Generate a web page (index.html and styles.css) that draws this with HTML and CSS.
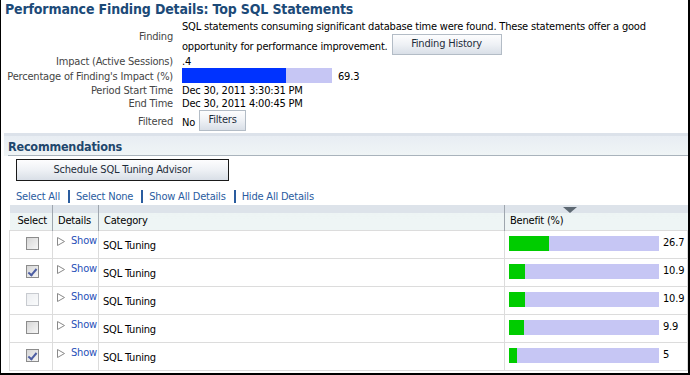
FILE: index.html
```html
<!DOCTYPE html>
<html lang="en">
<head>
  <meta charset="UTF-8" />
  <title>Performance Finding Details</title>
  <link rel="stylesheet" href="styles.css">
</head>
<body>
  <div class="page">
    <h1 class="judul">Performance Finding Details: Top SQL Statements</h1>

    <div class="detail">
      <div class="lbl">Finding</div>
      <div class="val finding">
        <div>SQL statements consuming significant database time were found. These statements offer a good</div>
        <div class="baris-dua"><span class="teks">opportunity for performance improvement.</span><span class="tombol tombol-history">Finding History</span></div>
      </div>

      <div class="lbl">Impact (Active Sessions)</div>
      <div class="val">.4</div>

      <div class="lbl">Percentage of Finding's Impact (%)</div>
      <div class="val bar-row">
        <span class="bar bar-impact"><span class="isi" style="width:69.3%"></span></span>
        <span class="angka">69.3</span>
      </div>

      <div class="lbl">Period Start Time</div>
      <div class="val">Dec 30, 2011 3:30:31 PM</div>

      <div class="lbl">End Time</div>
      <div class="val">Dec 30, 2011 4:00:45 PM</div>

      <div class="lbl">Filtered</div>
      <div class="val filtered"><span class="no">No</span><span class="tombol tombol-filter">Filters</span></div>
    </div>

    <div class="sub-header">
      <h2>Recommendations</h2>
    </div>

    <div class="rekomendasi">
      <span class="tombol tombol-utama">Schedule SQL Tuning Advisor</span>

      <div class="tautan">
        <a href="#">Select All</a><span class="pemisah"></span><a href="#">Select None</a><span class="pemisah"></span><a href="#">Show All Details</a><span class="pemisah"></span><a href="#">Hide All Details</a>
      </div>

      <table class="tabel">
        <thead>
          <tr>
            <th class="kol-select">Select</th>
            <th class="kol-details">Details</th>
            <th class="kol-category">Category</th>
            <th class="kol-benefit">Benefit (%)<span class="sort"></span></th>
          </tr>
        </thead>
        <tbody>
          <tr>
            <td class="kol-select"><span class="cek"></span></td>
            <td class="kol-details"><svg class="panah" width="8" height="9" viewBox="0 0 8 9"><polygon points="0.5,0.5 7.5,4.5 0.5,8.5" fill="#fff" stroke="#8a8a8a"/></svg><a href="#">Show</a></td>
            <td class="kol-category">SQL Tuning</td>
            <td class="kol-benefit"><span class="bar"><span class="isi hijau" style="width:26.7%"></span></span><span class="angka">26.7</span></td>
          </tr>
          <tr>
            <td class="kol-select"><span class="cek dicek"></span></td>
            <td class="kol-details"><svg class="panah" width="8" height="9" viewBox="0 0 8 9"><polygon points="0.5,0.5 7.5,4.5 0.5,8.5" fill="#fff" stroke="#8a8a8a"/></svg><a href="#">Show</a></td>
            <td class="kol-category">SQL Tuning</td>
            <td class="kol-benefit"><span class="bar"><span class="isi hijau" style="width:10.9%"></span></span><span class="angka">10.9</span></td>
          </tr>
          <tr>
            <td class="kol-select"><span class="cek pudar"></span></td>
            <td class="kol-details"><svg class="panah" width="8" height="9" viewBox="0 0 8 9"><polygon points="0.5,0.5 7.5,4.5 0.5,8.5" fill="#fff" stroke="#8a8a8a"/></svg><a href="#">Show</a></td>
            <td class="kol-category">SQL Tuning</td>
            <td class="kol-benefit"><span class="bar"><span class="isi hijau" style="width:10.9%"></span></span><span class="angka">10.9</span></td>
          </tr>
          <tr>
            <td class="kol-select"><span class="cek"></span></td>
            <td class="kol-details"><svg class="panah" width="8" height="9" viewBox="0 0 8 9"><polygon points="0.5,0.5 7.5,4.5 0.5,8.5" fill="#fff" stroke="#8a8a8a"/></svg><a href="#">Show</a></td>
            <td class="kol-category">SQL Tuning</td>
            <td class="kol-benefit"><span class="bar"><span class="isi hijau" style="width:9.9%"></span></span><span class="angka">9.9</span></td>
          </tr>
          <tr>
            <td class="kol-select"><span class="cek dicek"></span></td>
            <td class="kol-details"><svg class="panah" width="8" height="9" viewBox="0 0 8 9"><polygon points="0.5,0.5 7.5,4.5 0.5,8.5" fill="#fff" stroke="#8a8a8a"/></svg><a href="#">Show</a></td>
            <td class="kol-category">SQL Tuning</td>
            <td class="kol-benefit"><span class="bar"><span class="isi hijau" style="width:5%"></span></span><span class="angka">5</span></td>
          </tr>
        </tbody>
      </table>
    </div>
  </div>
</body>
</html>
```

FILE: styles.css
```css
* {
  margin: 0;
  padding: 0;
  box-sizing: border-box;
}

body {
  background: #fff;
}

.page {
  width: 690px;
  height: 375px;
  overflow: hidden;
  border: 2px solid #000;
  border-top: 0;
  border-left-width: 1px;
  font-family: "DejaVu Sans Condensed", "DejaVu Sans", sans-serif;
  font-stretch: condensed;
  font-size: 11px;
  letter-spacing: -0.2px;
  color: #000;
}

.judul {
  font-size: 14px;
  letter-spacing: -0.15px;
  line-height: 18px;
  padding-left: 4px;
  color: #1c4a78;
}

/* bagian detail */
.detail {
  display: grid;
  grid-template-columns: 172px 1fr;
  grid-template-rows: 37px 14px 15px 13px 14px 21px;
  column-gap: 9px;
}

.lbl {
  text-align: right;
  color: #454545;
  align-self: center;
  line-height: 14px;
  white-space: nowrap;
}

.val {
  line-height: 14px;
  align-self: center;
  white-space: nowrap;
}

.finding {
  padding-top: 2px;
  align-self: start;
}

.baris-dua {
  display: flex;
  align-items: flex-start;
  gap: 4px;
}

.baris-dua .teks {
  padding-top: 6px;
}

.tombol {
  display: inline-block;
  text-align: center;
  color: #1e2d3b;
  border: 1px solid #b3bcc6;
  background: linear-gradient(to bottom, #fdfdfe 0%, #eef1f5 50%, #d9dfe7 100%);
  cursor: pointer;
}

.tombol-history {
  width: 110px;
  height: 21px;
  line-height: 18px;
}

.filtered {
  align-self: stretch;
  display: flex;
  align-items: flex-start;
}

.filtered .no {
  padding-top: 5px;
}

.tombol-filter {
  width: 47px;
  height: 21px;
  line-height: 18px;
  margin-left: 4px;
  margin-top: -1px;
}

.bar-row {
  display: flex;
  align-items: center;
  margin-top: -3px;
}

.bar {
  display: inline-block;
  width: 150px;
  height: 15px;
  background: #c6c6f4;
  vertical-align: top;
}

.bar .isi {
  display: block;
  height: 100%;
  background: #0033ff;
}

.bar .isi.hijau {
  background: #00cc00;
}

.bar-row .angka {
  margin-left: 6px;
  margin-top: 3px;
}

/* sub header */
.sub-header {
  margin-top: 1px;
  margin-left: 3px;
  height: 23px;
  background: linear-gradient(to bottom, #dce2ea 0, #dce2ea 3px, #e8edf3 3px, #f0f5f6 100%);
}

.sub-header h2 {
  margin-left: 4px;
  font-size: 12.5px;
  letter-spacing: -0.2px;
  line-height: 16px;
  padding-top: 6px;
  color: #1f476d;
  border-bottom: 1px solid #a9b3bc;
}

.rekomendasi {
  padding-left: 8px;
}

.tombol-utama {
  margin-top: 3px;
  margin-left: 7px;
  width: 213px;
  height: 22px;
  line-height: 20px;
  border-color: #1a1a1a;
}

.tautan {
  margin-top: 8px;
  margin-left: 7px;
  height: 15px;
  line-height: 15px;
  display: flex;
  align-items: center;
}

.tautan a {
  color: #2a5c9f;
  text-decoration: none;
}

.pemisah {
  display: inline-block;
  width: 2px;
  height: 13px;
  background: #2a5c9f;
  margin: 0 6px 0 8px;
}

/* tabel */
.tabel {
  margin-top: 1px;
  width: 679px;
  border-collapse: collapse;
  table-layout: fixed;
}

.tabel th {
  height: 25px;
  font-weight: normal;
  text-align: left;
  padding: 7px 0 0 5px;
  border-left: 1px solid #9ea6ae;
  background: linear-gradient(to bottom, #dde3ea 0, #dde3ea 8px, #edf4f4 8px, #eef5f5 100%);
  position: relative;
}

.tabel th:first-child {
  border-left: 0;
  padding-left: 8px;
}

.tabel td {
  height: 28px;
  border: 1px solid #dcdcdc;
  padding-left: 4px;
}

.kol-select { width: 43px; }
.kol-details { width: 46px; }
.kol-category { width: 406px; }

.tabel td.kol-select {
  text-align: center;
  padding-left: 2px;
  vertical-align: top;
  padding-top: 6px;
}

.tabel td.kol-details {
  vertical-align: top;
  padding-top: 3px;
  white-space: nowrap;
}

.panah {
  margin-right: 6px;
  margin-top: 3px;
  vertical-align: top;
}

.kol-details a {
  color: #2750b8;
  text-decoration: none;
}

.tabel td.kol-category {
  padding-top: 2px;
}

.tabel td.kol-benefit {
  padding-left: 4px;
  vertical-align: top;
  padding-top: 5px;
  white-space: nowrap;
}

.kol-benefit .angka {
  margin-left: 4px;
  line-height: 14px;
}

.sort {
  position: absolute;
  left: 58px;
  top: 2px;
  width: 0;
  height: 0;
  border-left: 7px solid transparent;
  border-right: 7px solid transparent;
  border-top: 6px solid #5d6872;
}

.cek {
  display: inline-block;
  width: 13px;
  height: 13px;
  border: 1px solid #8c8c8c;
  background: linear-gradient(to bottom right, #d6d6d6, #f6f6f6);
  position: relative;
}

.cek.pudar {
  border-color: #c8cbd0;
  background: linear-gradient(to bottom right, #eceef1, #fafbfc);
}

.cek.dicek::after {
  content: "";
  position: absolute;
  left: 3px;
  top: 1px;
  width: 3px;
  height: 7px;
  border-right: 2px solid #4d5ea3;
  border-bottom: 2px solid #4d5ea3;
  transform: rotate(40deg);
}
```
